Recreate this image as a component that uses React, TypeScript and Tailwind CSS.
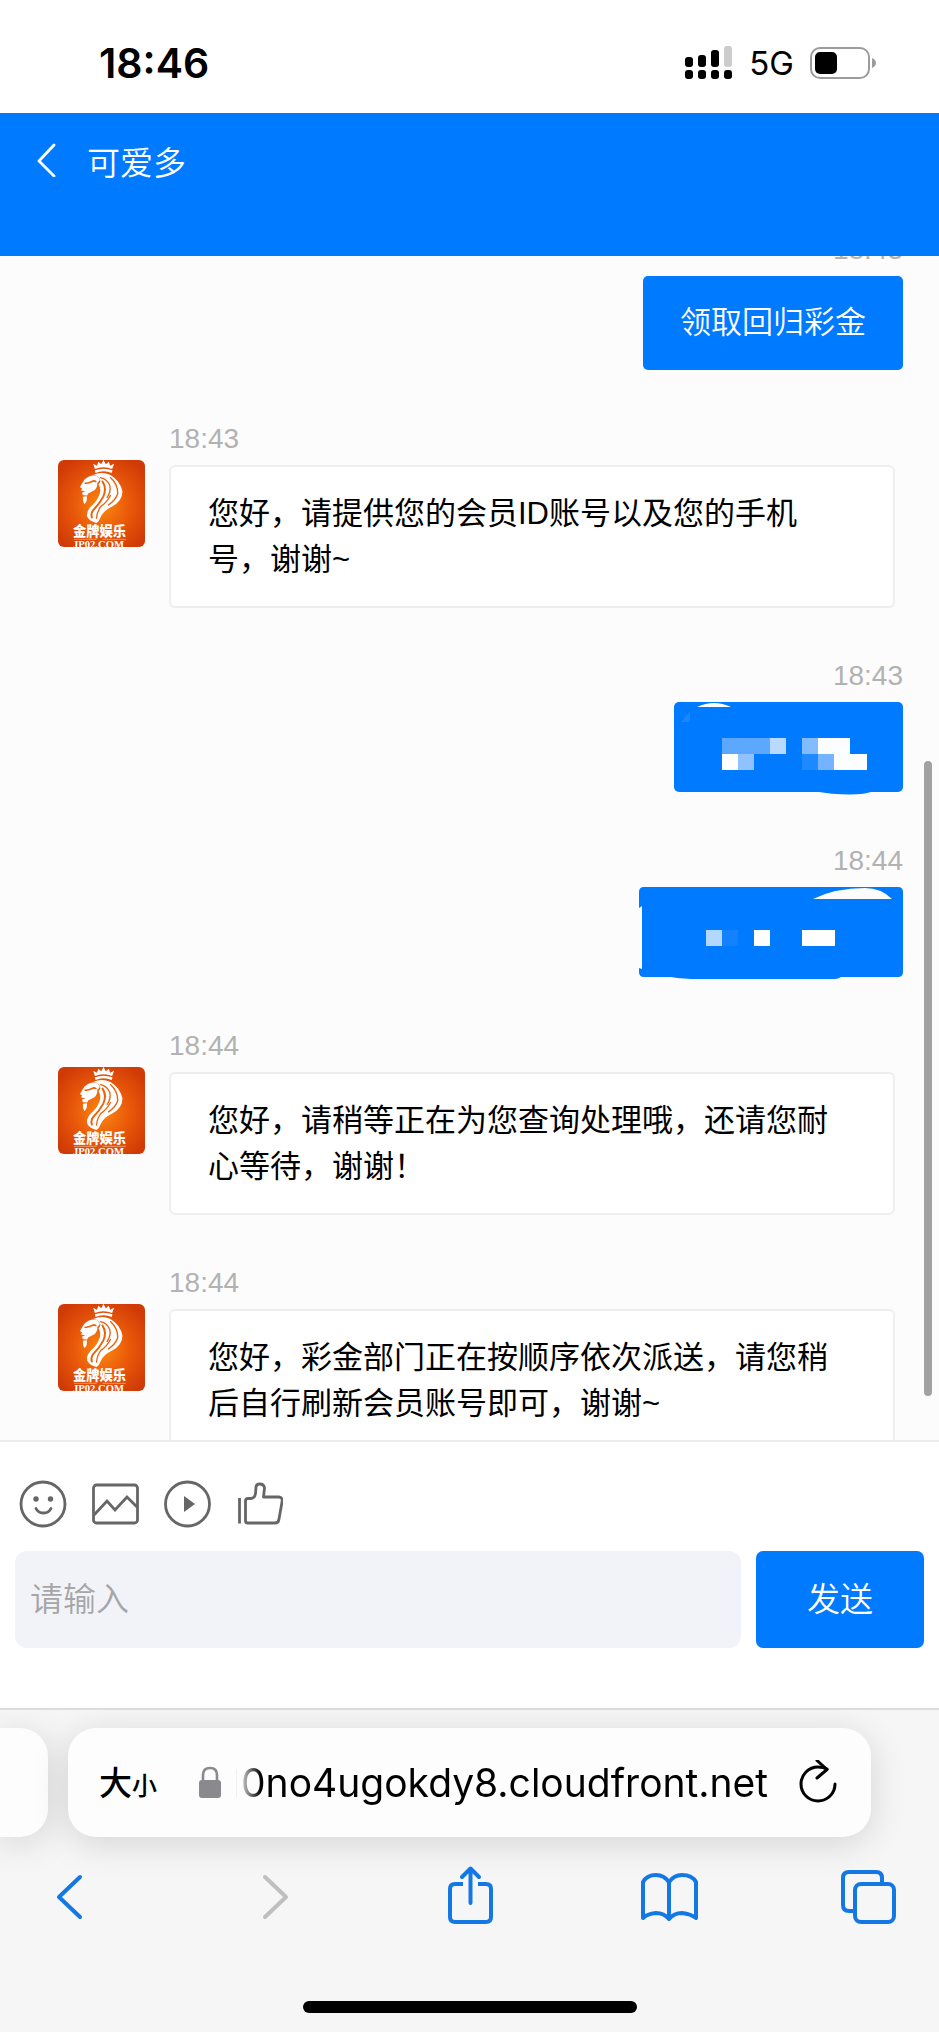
import { useState, type ReactNode } from 'react';

interface Message {
  id: number;
  side: 'agent' | 'me';
  time: string;
  content: ReactNode;
  masked?: boolean;
}

// 客服头像
function AgentAvatar() {
  return (
    <svg viewBox="24 27 262 262" className="mt-[37px] size-[87px] shrink-0 rounded-md" role="img" aria-label="金牌娱乐">
      <defs>
        <radialGradient id="avatarGlow" cx="50%" cy="52%" r="62%">
          <stop offset="0%" stopColor="#fb8a10" />
          <stop offset="50%" stopColor="#ea5a0a" />
          <stop offset="100%" stopColor="#cf3a06" />
        </radialGradient>
      </defs>
      <rect x="24" y="27" width="262" height="262" fill="url(#avatarGlow)" />
      {/* 皇冠 */}
      <g fill="#fff">
        <path d="M135 54 L130 38 L141 44 L146 32 L154 40 L161 27 L168 40 L177 32 L181 44 L193 38 L187 54 Q161 44 135 54Z" />
        <path d="M135 58 Q161 48 188 58 L186 66 Q161 56 137 66Z" />
      </g>
      {/* 狮头和鬃毛 */}
      <g fill="#fff">
        <path d="M128 74 Q108 78 100 92 L91 107 Q90 112 97 113 L93 118 Q98 121 107 120 L97 125 Q95 131 101 133 L112 134 Q113 126 122 124 L134 118 Q144 108 142 96 Q150 92 150 84 Q142 72 128 74Z" />
        <path d="M99 138 L111 136 Q113 150 104 160 Q97 150 99 138Z" />
        <path d="M130 72 Q156 60 182 72 Q212 90 218 122 Q219 150 186 168 Q160 180 152 200 Q148 212 140 217 Q120 212 112 198 Q108 184 122 168 Q142 152 150 128 Q154 112 146 100 Q156 92 148 80 Q140 72 130 72Z" />
      </g>
      <g fill="none" stroke="#ea620c" strokeLinecap="round">
        <path d="M106 97 Q116 98 126 92 Q132 88 138 92" strokeWidth="5" />
        <path d="M152 80 Q172 84 180 104 Q184 122 172 140" strokeWidth="4" />
        <path d="M158 92 Q172 112 160 138 Q148 160 130 178 Q122 188 126 200" strokeWidth="6" />
        <path d="M182 80 Q204 100 204 128 Q198 148 176 162" strokeWidth="4" />
        <path d="M182 134 Q170 156 154 166 Q142 180 140 202" strokeWidth="4" />
      </g>
      <text x="69" y="256" fontSize="40" fontWeight="900" fill="#fff" className="font-['Noto_Sans_CJK_SC',sans-serif]">
        金牌娱乐
      </text>
      <path d="M72 266 H140 M158 266 H228" stroke="#f9b98c" strokeWidth="2" />
      <text x="69" y="291" fontSize="32" fontWeight="700" fill="#fff" className="font-['Liberation_Serif',serif]">
        JP02.COM
      </text>
    </svg>
  );
}

// 打码的账号
function MaskedAccount() {
  return (
    <svg width="229" height="90" viewBox="0 0 229 90" className="block overflow-visible" aria-hidden="true">
      <rect width="229" height="90" rx="5" fill="#007aff" />
      <path d="M138 89 Q182 96 200 89Z" fill="#007aff" />
      <path d="M23 5 Q40 -3 57 5Z" fill="#fcfcfc" />
      <path d="M7 20 L16 9 V20Z" fill="#1a86ff" />
      <path d="M48 36h48v16h-48z" fill="#5ca8ff" />
      <path d="M96 36h16v16h-16z" fill="#b8daff" />
      <path d="M48 52h16v16h-16z" fill="#fff" />
      <path d="M64 52h16v16h-16z" fill="#90c2ff" />
      <path d="M128 36h16v16h-16z" fill="#82bbff" />
      <path d="M144 36h32v16h-32z" fill="#fbfdff" />
      <path d="M128 52h16v16h-16z" fill="#1f89ff" />
      <path d="M144 52h16v16h-16z" fill="#74b3ff" />
      <path d="M160 52h33v16h-33z" fill="#fbfdff" />
    </svg>
  );
}

// 打码的手机号
function MaskedPhone() {
  return (
    <svg width="264" height="90" viewBox="0 0 264 90" className="block overflow-visible" aria-hidden="true">
      <path
        d="M5 0 H259 Q264 0 264 5 V85 Q264 90 259 90 H202 Q199 92 196 92 H60 Q44 92 32 90 H5 Q0 90 0 85 V81 L3 82 V19 L0 21 V5 Q0 0 5 0Z"
        fill="#007aff"
      />
      <path d="M174 12 Q196 1 226 1 Q242 1 253 12Z" fill="#fcfcfc" />
      <path d="M67 43h16v16h-16z" fill="#b3d7ff" />
      <path d="M83 43h16v16h-16z" fill="#1482ff" />
      <path d="M115 43h16v16h-16z" fill="#fff" />
      <path d="M163 43h33v16h-33z" fill="#fff" />
    </svg>
  );
}

const MESSAGES: Message[] = [
  { id: 1, side: 'me', time: '18:43', content: '领取回归彩金' },
  { id: 2, side: 'agent', time: '18:43', content: '您好，请提供您的会员ID账号以及您的手机号，谢谢~' },
  { id: 3, side: 'me', time: '18:43', content: <MaskedAccount />, masked: true },
  { id: 4, side: 'me', time: '18:44', content: <MaskedPhone />, masked: true },
  { id: 5, side: 'agent', time: '18:44', content: '您好，请稍等正在为您查询处理哦，还请您耐心等待，谢谢！' },
  { id: 6, side: 'agent', time: '18:44', content: '您好，彩金部门正在按顺序依次派送，请您稍后自行刷新会员账号即可，谢谢~' },
];

function AgentMessage({ message }: { message: Message }) {
  return (
    <li className="flex items-start gap-6 pr-11 pl-[58px] pb-[52px]">
      <AgentAvatar />
      <div className="min-w-0 flex-1">
        <time className="block text-[28px] leading-8 text-[#b2b2b2]">{message.time}</time>
        <p className="mt-[10px] rounded-md border-2 border-[#eeeeee] bg-white px-[37px] pt-6 pb-[23px] text-[31px] leading-[46px] text-black">
          {message.content}
        </p>
      </div>
    </li>
  );
}

function MyMessage({ message }: { message: Message }) {
  return (
    <li className="flex flex-col items-end pr-9 pb-[53px]">
      <time className="text-[28px] leading-8 text-[#b2b2b2]">{message.time}</time>
      {message.masked ? (
        <div className="mt-[10px]">{message.content}</div>
      ) : (
        <p className="mt-[10px] rounded-[5px] bg-[#007aff] px-[37px] py-6 text-[31px] leading-[46px] font-[350] text-white">
          {message.content}
        </p>
      )}
    </li>
  );
}

function StatusBar() {
  return (
    <div className="flex h-[113px] shrink-0 items-center justify-between bg-white pt-3 pr-[62px] pl-[99px] font-['Inter',sans-serif]">
      <span className="text-[41px] leading-[48px] font-semibold text-black">18:46</span>
      <div className="flex items-center gap-4">
        <svg width="48" height="34" viewBox="0 0 48 34" aria-hidden="true">
          <rect x="0" y="11" width="8" height="10" rx="3" />
          <rect x="13" y="9" width="8" height="12" rx="3" />
          <rect x="26" y="4" width="8" height="17" rx="3" />
          <rect x="39" y="0" width="8" height="21" rx="3" fill="#cbcbcb" />
          <rect x="0" y="24" width="8" height="9" rx="3" />
          <rect x="13" y="24" width="8" height="9" rx="3" />
          <rect x="26" y="24" width="8" height="9" rx="3" />
          <rect x="39" y="24" width="8" height="9" rx="3" />
        </svg>
        <span className="text-[33px] leading-10 text-black">5G</span>
        <svg width="67" height="32" viewBox="0 0 67 32" aria-hidden="true">
          <rect x="1" y="1" width="58" height="30" rx="9" fill="none" stroke="#9c9c9c" strokeWidth="2" />
          <rect x="5" y="5" width="22" height="22" rx="5" />
          <path d="M62 11 Q66 13 66 16 Q66 19 62 21Z" fill="#9c9c9c" />
        </svg>
      </div>
    </div>
  );
}

function ChatToolbar() {
  const iconClass = 'block size-12';

  return (
    <div className="flex gap-6 pl-[19px]">
      <button type="button" aria-label="表情">
        <svg viewBox="0 0 48 48" className={iconClass} fill="none" stroke="#666" strokeWidth="2.8">
          <circle cx="24" cy="24" r="22" />
          <circle cx="17" cy="19" r="2.7" fill="#666" stroke="none" />
          <circle cx="31.5" cy="19" r="2.7" fill="#666" stroke="none" />
          <path d="M17 28.500 Q19 33 24.500 33 Q30 33 32 28.500" strokeLinecap="round" />
        </svg>
      </button>
      <button type="button" aria-label="图片">
        <svg viewBox="0 0 48 48" className={iconClass} fill="none" stroke="#666" strokeWidth="2.8">
          <rect x="2.5" y="5" width="44" height="38" rx="3" />
          <path d="M3 35 L16 21 L24 30 L36 17 L46 27" />
        </svg>
      </button>
      <button type="button" aria-label="视频">
        <svg viewBox="0 0 48 48" className={iconClass} fill="none" stroke="#666" strokeWidth="2.8">
          <circle cx="24.5" cy="24" r="22" />
          <path d="M21 16 L32 24 L21 32Z" fill="#666" stroke="none" />
        </svg>
      </button>
      <button type="button" aria-label="评价">
        <svg viewBox="0 0 48 48" className={iconClass} fill="none" stroke="#666" strokeWidth="2.8" strokeLinejoin="round">
          <path d="M4.500 18 V43.500" />
          <path d="M10.500 21 Q10.500 18.500 13 18.500 H16 Q20 18 20.500 13.500 L21 7 Q21.500 4 24.500 4 Q29 4 29.500 8 L28.500 17 H44 Q48 17.500 47 22 L44 39 Q43.500 43 40 43 H12.500 Q10.500 43 10.500 40.500Z" />
        </svg>
      </button>
    </div>
  );
}

function BrowserBar() {
  return (
    <div className="shrink-0 overflow-hidden border-t-2 border-[#dcdcde] bg-[#f6f6f6] pt-[18px]">
      <div className="flex gap-5 pr-[68px]">
        <div className="h-[109px] w-12 shrink-0 rounded-r-[28px] bg-[#fdfdfd] shadow-[0_6px_36px_rgba(0,0,0,0.14)]" />
        <div className="flex h-[109px] min-w-0 flex-1 items-center rounded-[28px] bg-[#fdfdfd] pr-[34px] pl-[31px] shadow-[0_6px_36px_rgba(0,0,0,0.14)]">
          <button type="button" aria-label="页面设置" className="flex shrink-0 items-baseline font-['Noto_Sans_CJK_SC',sans-serif] font-medium text-black">
            <span className="text-[33px] leading-10">大</span>
            <span className="text-[25px] leading-10">小</span>
          </button>
          <svg viewBox="0 0 24 34" className="ml-[41px] h-[34px] w-6 shrink-0" aria-hidden="true">
            <path d="M5 15 V9 Q5 2 12 2 Q19 2 19 9 V15" fill="none" stroke="#8a8a8e" strokeWidth="2.6" />
            <rect x="1" y="14" width="22" height="18" rx="3" fill="#8a8a8e" />
          </svg>
          <span className="ml-[14px] h-7 w-px shrink-0 bg-[#f0f0f0]" />
          <span className="min-w-0 flex-1 overflow-hidden pl-1 font-['Inter',sans-serif] text-[39px] leading-[48px] whitespace-nowrap text-black [mask-image:linear-gradient(to_right,transparent,black_24px)]">
            0no4ugokdy8.cloudfront.net
          </span>
          <button type="button" aria-label="重新加载" className="shrink-0">
            <svg viewBox="0 0 38 46" className="block h-[46px] w-[38px]" fill="none" stroke="#000" strokeWidth="3" strokeLinecap="round" strokeLinejoin="round">
              <path d="M36 24 A17 17 0 1 1 19 7 Q24 7 28 9" />
              <path d="M18 0.500 L28 9.500 L18 18" />
            </svg>
          </button>
        </div>
      </div>
      <nav className="mt-7 flex justify-between px-10 text-[#1478e4]">
        <button type="button" aria-label="后退">
          <svg viewBox="0 0 60 60" className="block size-[60px]" fill="none" stroke="currentColor" strokeWidth="4" strokeLinecap="round" strokeLinejoin="round">
            <path d="M40 12 L19 32 L40 52" />
          </svg>
        </button>
        <button type="button" aria-label="前进" disabled>
          <svg viewBox="0 0 60 60" className="block size-[60px]" fill="none" stroke="#bfbfbf" strokeWidth="4" strokeLinecap="round" strokeLinejoin="round">
            <path d="M25 12 L46 32 L25 52" />
          </svg>
        </button>
        <button type="button" aria-label="分享">
          <svg viewBox="0 0 60 60" className="block size-[60px]" fill="none" stroke="currentColor" strokeWidth="4">
            <path d="M23 19 H15 Q10 19 10 24 V52 Q10 57 15 57 H46 Q51 57 51 52 V24 Q51 19 46 19 H38" />
            <path d="M30.500 38 V4 M22 12 L30.500 3.500 L39 12" strokeLinecap="round" strokeLinejoin="round" />
          </svg>
        </button>
        <button type="button" aria-label="书签">
          <svg viewBox="0 0 60 60" className="block size-[60px]" fill="none" stroke="currentColor" strokeWidth="4" strokeLinecap="round" strokeLinejoin="round">
            <path d="M30 17 Q25 10 17 10 Q8 10 4 17 V53 Q8 49 17 48 Q25 48 30 54 Q35 48 43 48 Q52 49 57 53 V17 Q53 10 43 10 Q35 10 30 17 V53" />
          </svg>
        </button>
        <button type="button" aria-label="标签页">
          <svg viewBox="0 0 60 60" className="block size-[60px]" fill="none" stroke="currentColor" strokeWidth="4">
            <path d="M15 46 H10 Q4 46 4 40 V13 Q4 7 10 7 H37 Q43 7 43 13 V18" />
            <rect x="16" y="19" width="39" height="38" rx="6" />
          </svg>
        </button>
      </nav>
      <div className="mx-auto mt-[76px] mb-[19px] h-3 w-[334px] rounded-full bg-black" />
    </div>
  );
}

export default function App() {
  const [draft, setDraft] = useState('');

  return (
    <div className="flex h-screen flex-col overflow-hidden bg-white font-['Liberation_Sans','Noto_Sans_CJK_SC',sans-serif]">
      <StatusBar />

      {/* 顶部标题 */}
      <header className="flex h-[143px] shrink-0 items-start gap-[31px] bg-[#007aff] pt-7 pl-[37px] text-white">
        <button type="button" aria-label="返回">
          <svg viewBox="0 0 19 36" className="block h-9 w-[19px]" fill="none" stroke="currentColor" strokeWidth="2.8" strokeLinecap="round" strokeLinejoin="round">
            <path d="M17 4 L2 20 L17 35" />
          </svg>
        </button>
        <h1 className="text-[33px] leading-[46px] font-[350]">可爱多</h1>
      </header>

      {/* 消息列表 */}
      <main className="relative min-h-0 flex-1 overflow-hidden bg-[#fcfcfc]">
        <ol className="-mt-[22px]">
          {MESSAGES.map((message) =>
            message.side === 'agent' ? (
              <AgentMessage key={message.id} message={message} />
            ) : (
              <MyMessage key={message.id} message={message} />
            )
          )}
        </ol>
        <div className="absolute top-[505px] right-[7px] h-[635px] w-2 rounded-full bg-[#a2a2a2]" />
      </main>

      {/* 输入区域 */}
      <form className="shrink-0 border-t-2 border-[#ececec] bg-white pt-[38px] pb-[60px]" onSubmit={(e) => e.preventDefault()}>
        <ChatToolbar />
        <div className="mt-[23px] flex gap-[15px] px-[15px]">
          <input
            type="text"
            aria-label="消息"
            value={draft}
            onChange={(e) => setDraft(e.target.value)}
            placeholder="请输入"
            className="h-[97px] min-w-0 flex-1 rounded-xl bg-[#f2f3f8] px-[15px] text-[33px] font-[350] text-black outline-none placeholder:text-[#a6a6a8]"
          />
          <button type="submit" className="h-[97px] w-[168px] shrink-0 rounded-[7px] bg-[#007aff] text-[33px] font-[350] text-white">
            发送
          </button>
        </div>
      </form>

      <BrowserBar />
    </div>
  );
}
